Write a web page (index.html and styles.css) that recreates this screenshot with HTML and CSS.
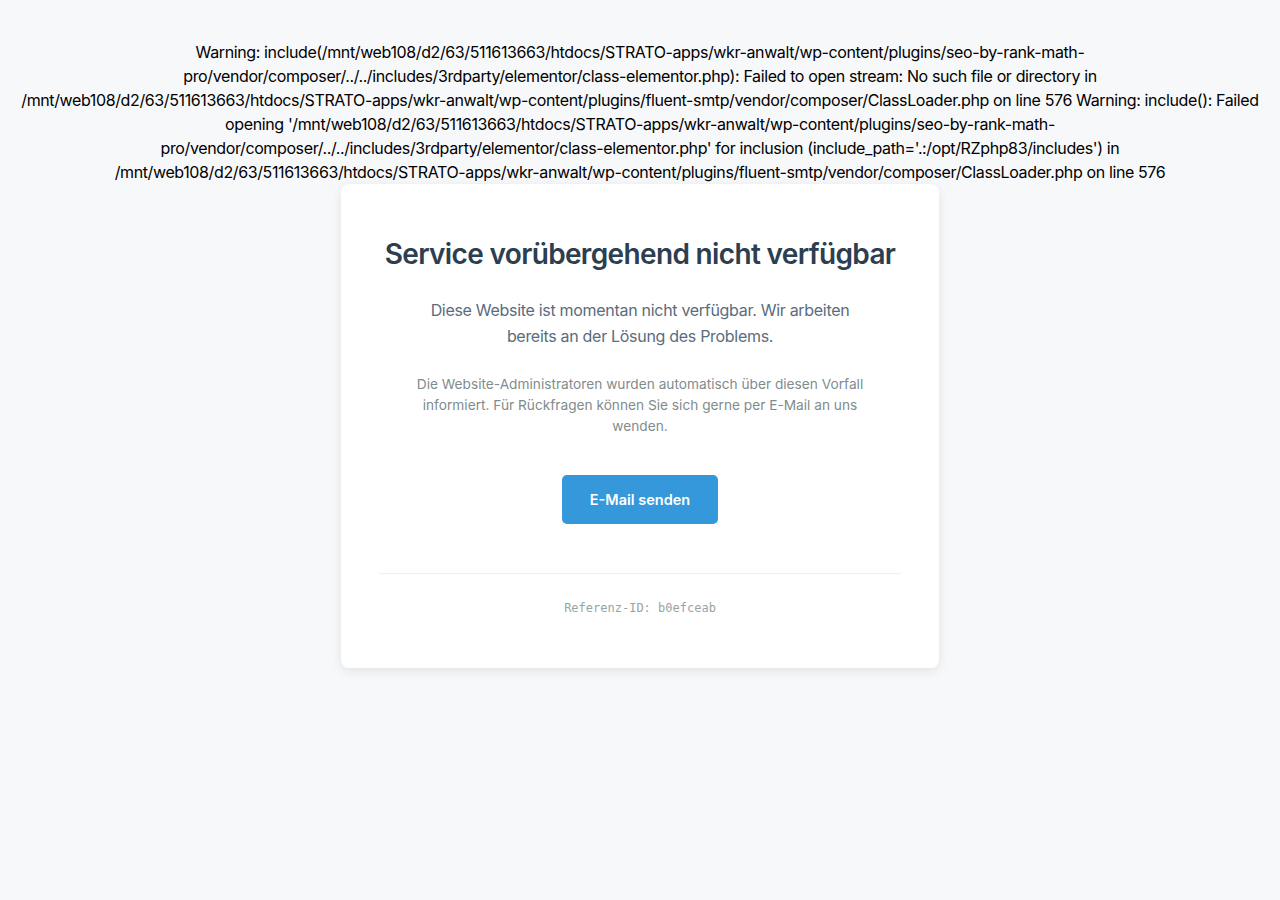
FILE: index.html
```html
<!DOCTYPE html>
<html lang="de">
<head>
<meta charset="utf-8">
<title>Service vorübergehend nicht verfügbar</title>
<link rel="stylesheet" href="styles.css">
</head>
<body>
<div class="php-warning">Warning: include(/mnt/web108/d2/63/511613663/htdocs/STRATO-apps/wkr-anwalt/wp-content/plugins/seo-by-rank-math-pro/vendor/composer/../../includes/3rdparty/elementor/class-elementor.php): Failed to open stream: No such file or directory in /mnt/web108/d2/63/511613663/htdocs/STRATO-apps/wkr-anwalt/wp-content/plugins/fluent-smtp/vendor/composer/ClassLoader.php on line 576 Warning: include(): Failed opening '/mnt/web108/d2/63/511613663/htdocs/STRATO-apps/wkr-anwalt/wp-content/plugins/seo-by-rank-math-pro/vendor/composer/../../includes/3rdparty/elementor/class-elementor.php' for inclusion (include_path='.:/opt/RZphp83/includes') in /mnt/web108/d2/63/511613663/htdocs/STRATO-apps/wkr-anwalt/wp-content/plugins/fluent-smtp/vendor/composer/ClassLoader.php on line 576</div>
<main class="card">
  <h1 class="title">Service vorübergehend nicht verfügbar</h1>
  <p class="lead">Diese Website ist momentan nicht verfügbar. Wir arbeiten bereits an der Lösung des Problems.</p>
  <p class="note">Die Website-Administratoren wurden automatisch über diesen Vorfall informiert. Für Rückfragen können Sie sich gerne per E-Mail an uns wenden.</p>
  <a class="btn" href="#">E-Mail senden</a>
  <div class="footer">Referenz-ID: b0efceab</div>
</main>
</body>
</html>
```
FILE: styles.css
```css
html, body {
  margin: 0;
  padding: 0;
}
body {
  background: #f7f8fa;
  font-family: Inter, "Noto Sans", "Liberation Sans", sans-serif;
  color: #000;
  display: flex;
  flex-direction: column;
  align-items: center;
  padding: 40px 16px;
  box-sizing: border-box;
  min-height: 100vh;
}
.php-warning {
  font-size: 16px;
  line-height: 24px;
  letter-spacing: -0.38px;
  text-align: center;
  width: 100%;
}
.card {
  width: 598px;
  box-sizing: border-box;
  background: #fff;
  border-radius: 8px;
  box-shadow: 0 3px 12px rgba(0, 0, 0, 0.09);
  padding: 53px 38px 51px;
  text-align: center;
  display: flex;
  flex-direction: column;
  align-items: center;
}
.title {
  margin: 0;
  font-size: 28px;
  line-height: 34px;
  font-weight: 600;
  color: #2c3e50;
  letter-spacing: -0.65px;
  white-space: nowrap;
}
.lead {
  margin: 26px 0 0;
  max-width: 450px;
  font-size: 16px;
  line-height: 26px;
  letter-spacing: -0.3px;
  color: #5a6c7d;
}
.note {
  margin: 25px 0 0;
  max-width: 450px;
  font-size: 13.7px;
  line-height: 21px;
  color: #7f8c8d;
}
.btn {
  margin-top: 38px;
  display: inline-block;
  background: #3498db;
  color: #fff;
  text-decoration: none;
  font-size: 14.5px;
  font-weight: 600;
  line-height: 19px;
  padding: 15px 28px;
  border-radius: 5px;
}
.footer {
  align-self: stretch;
  margin-top: 49px;
  padding-top: 25px;
  border-top: 1px solid #eef0f2;
  font-family: "DejaVu Sans Mono", "Liberation Mono", monospace;
  font-size: 12px;
  line-height: 18px;
  color: #95a5a6;
}
```
